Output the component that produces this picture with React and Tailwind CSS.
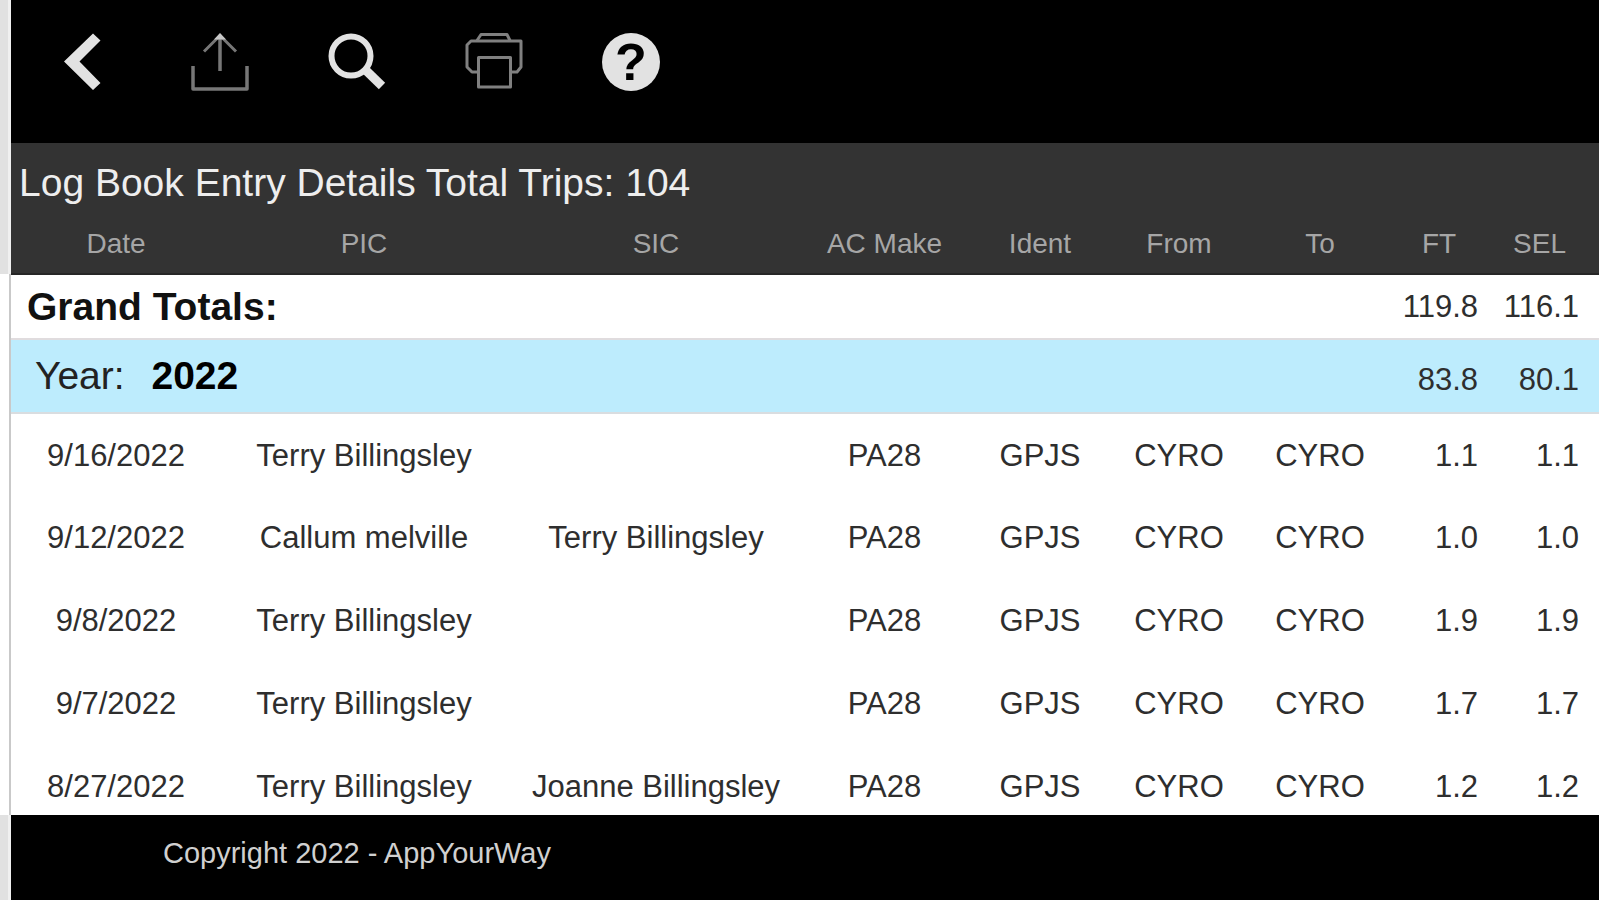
import React from "react";

const entries = [
  { date: "9/16/2022", pic: "Terry Billingsley", sic: "", make: "PA28", ident: "GPJS", from: "CYRO", to: "CYRO", ft: "1.1", sel: "1.1" },
  { date: "9/12/2022", pic: "Callum melville", sic: "Terry Billingsley", make: "PA28", ident: "GPJS", from: "CYRO", to: "CYRO", ft: "1.0", sel: "1.0" },
  { date: "9/8/2022", pic: "Terry Billingsley", sic: "", make: "PA28", ident: "GPJS", from: "CYRO", to: "CYRO", ft: "1.9", sel: "1.9" },
  { date: "9/7/2022", pic: "Terry Billingsley", sic: "", make: "PA28", ident: "GPJS", from: "CYRO", to: "CYRO", ft: "1.7", sel: "1.7" },
  { date: "8/27/2022", pic: "Terry Billingsley", sic: "Joanne Billingsley", make: "PA28", ident: "GPJS", from: "CYRO", to: "CYRO", ft: "1.2", sel: "1.2" },
];

const headings = ["Date", "PIC", "SIC", "AC Make", "Ident", "From", "To", "FT", "SEL"];

const BackIcon = () => (
  <svg viewBox="0 0 58 58" className="size-[58px]" fill="#e2e2e2">
    <path d="M10 28.5 39 0.5l7.5 7L25.5 28.5l21 21.5-7.5 7z" />
  </svg>
);

const ShareIcon = () => (
  <svg viewBox="0 0 58 58" className="size-[58px]" fill="none" stroke="#777777">
    <path d="M2 33v23h54V33" strokeWidth="3.5" strokeLinejoin="round" />
    <path d="M29 3v35" strokeWidth="3.5" />
    <path d="M13 18.5 29 2.5 45 18.5" strokeWidth="3" />
    <path d="M29 0l6 6.5h-12z" fill="#c8c8c8" stroke="none" />
  </svg>
);

const SearchIcon = () => (
  <svg viewBox="0 0 58 58" className="size-[58px]" fill="none" stroke="#e2e2e2">
    <circle cx="23" cy="23" r="19.5" strokeWidth="6" />
    <path d="M36.5 36 54 53" strokeWidth="9" />
  </svg>
);

const PrintIcon = () => (
  <svg viewBox="0 0 58 58" className="size-[58px]" fill="none" stroke="#808080" strokeWidth="3" strokeLinejoin="round">
    <path d="M12 7.5l4-6h26l3 6" />
    <path d="M13 39H7l-5-5V12l4-4h50v26l-4 5h-6" />
    <rect x="13.5" y="24.5" width="32" height="29.5" />
  </svg>
);

const IconButton = ({ label, children }) => (
  <button type="button" aria-label={label} className="cursor-pointer">
    {children}
  </button>
);

// Outer window edge that runs down the left of the dark bars
const Edge = () => (
  <div className="w-[11px] shrink-0 border-r-[3px] border-[#f0f0f0] bg-[#e1e1e1]" />
);

const App = () => {
  return (
    <div className="flex h-screen flex-col overflow-hidden bg-white font-['Liberation_Sans',Arial,sans-serif]">
      <header className="flex shrink-0 bg-black">
        <Edge />
        <nav className="flex gap-[79px] pt-[33px] pr-6 pb-[52px] pl-[43px]">
          <IconButton label="Back">
            <BackIcon />
          </IconButton>
          <IconButton label="Share">
            <ShareIcon />
          </IconButton>
          <IconButton label="Search">
            <SearchIcon />
          </IconButton>
          <IconButton label="Print">
            <PrintIcon />
          </IconButton>
          <IconButton label="Help">
            <span className="flex size-[58px] items-center justify-center rounded-full bg-[#e2e2e2] text-[52px] leading-none font-bold text-black">
              ?
            </span>
          </IconButton>
        </nav>
      </header>

      <div className="flex shrink-0 bg-[#333333]">
        <Edge />
        <h1 className="pl-2 text-[39px] leading-[79px] whitespace-nowrap text-[#eeeeee]">
          Log Book Entry Details Total Trips: 104
        </h1>
      </div>

      <main className="min-h-0 flex-1 overflow-hidden">
        <div className="flex">
          <div className="w-[11px] shrink-0">
            <div className="h-[52px] border-r-[3px] border-[#f0f0f0] bg-[#e1e1e1]" />
            <div className="h-full border-r-2 border-[#c9c9c9]" />
          </div>
          <table className="w-full table-fixed border-collapse text-center text-[31px] leading-none whitespace-nowrap text-[#2e2e2e]">
            <colgroup>
              <col className="w-[210px]" />
              <col className="w-[286px]" />
              <col className="w-[298px]" />
              <col className="w-[159px]" />
              <col className="w-[152px]" />
              <col className="w-[126px]" />
              <col className="w-[156px]" />
              <col className="w-[82px]" />
              <col className="w-[119px]" />
            </colgroup>
            <thead className="bg-[#333333] text-[28px] text-[#a6a6a6]">
              <tr className="h-[52px] border-b-2 border-[#262626]">
                {headings.map((heading) => (
                  <th key={heading} className="pb-2 font-normal">
                    {heading}
                  </th>
                ))}
              </tr>
            </thead>
            <tbody>
              <tr className="h-[65px] border-b-2 border-[#e0dcde]">
                <th colSpan={7} className="pl-4 text-left text-[39px] font-bold text-[#111111]">
                  Grand Totals:
                </th>
                <td className="pr-0.5 text-right">119.8</td>
                <td className="pr-5 text-right">116.1</td>
              </tr>
              <tr className="h-[74px] border-b-2 border-[#d9dde0] bg-[#bdecfd]">
                <th colSpan={7} className="pb-0.5 pl-6 text-left text-[39px] font-normal text-[#222222]">
                  Year: <span className="pl-4 font-bold text-black">2022</span>
                </th>
                <td className="pt-1.5 pr-0.5 text-right">83.8</td>
                <td className="pt-1.5 pr-5 text-right">80.1</td>
              </tr>
              {entries.map((entry) => (
                <tr key={entry.date} className="h-[83px]">
                  <td>{entry.date}</td>
                  <td>{entry.pic}</td>
                  <td>{entry.sic}</td>
                  <td>{entry.make}</td>
                  <td>{entry.ident}</td>
                  <td>{entry.from}</td>
                  <td>{entry.to}</td>
                  <td className="pr-0.5 text-right">{entry.ft}</td>
                  <td className="pr-5 text-right">{entry.sel}</td>
                </tr>
              ))}
            </tbody>
          </table>
        </div>
      </main>

      <footer className="flex h-[85px] shrink-0 bg-black">
        <Edge />
        <p className="pt-6 pl-[152px] text-[29px] leading-7 whitespace-nowrap text-[#d0d0d0]">
          Copyright 2022 - AppYourWay
        </p>
      </footer>
    </div>
  );
};

export default App;
